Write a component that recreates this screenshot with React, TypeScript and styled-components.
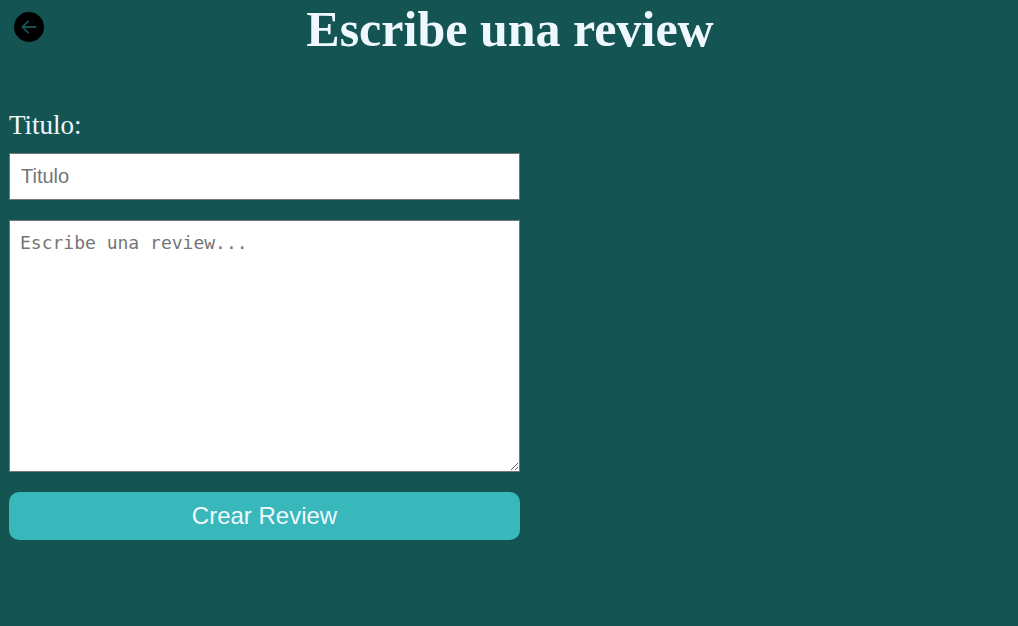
import React from "react";
import styled, { createGlobalStyle } from "styled-components";
import { BsArrowLeftCircleFill } from "react-icons/bs";

const GlobalStyle = createGlobalStyle`
  *, *::before, *::after {
    box-sizing: border-box;
  }
  body {
    margin: 0;
    min-height: 100vh;
    background: #145553;
    color: aliceblue;
    font-family: "Liberation Serif", "Times New Roman", serif;
  }
`;

const Header = styled.header`
  display: grid;
  grid-template-columns: 44px 1fr 42px;
  align-items: start;
`;

const BackLink = styled.a`
  display: block;
  margin: 12px 0 0 14px;
  height: 30px;
  color: #000;

  svg {
    display: block;
    width: 30px;
    height: 30px;
  }
`;

const Title = styled.h1`
  margin: 0;
  font-size: 50px;
  line-height: 58px;
  text-align: center;
`;

const Form = styled.form`
  display: flex;
  flex-direction: column;
  gap: 20px;
  max-width: 529px;
  padding: 52px 9px 20px;
`;

const Field = styled.div`
  display: flex;
  flex-direction: column;
  gap: 12px;
`;

const Label = styled.label`
  font-size: 27px;
  line-height: 31px;
`;

const TextInput = styled.input`
  width: 100%;
  height: 47px;
  padding: 10px 11px;
  border: 1px solid #767676;
  border-radius: 0;
  background: #fff;
  color: #000;
  font: 20px "Liberation Sans", Arial, sans-serif;

  &::placeholder {
    color: #757575;
  }
`;

const TextArea = styled.textarea`
  display: block;
  width: 100%;
  height: 252px;
  padding: 10px;
  border: 1px solid #767676;
  border-radius: 0;
  background: #fff;
  color: #000;
  font: 18px/24px "DejaVu Sans Mono", monospace;

  &::placeholder {
    color: #757575;
  }
`;

const SubmitButton = styled.button`
  height: 48px;
  border: 0;
  border-radius: 10px;
  background: #38b8ba;
  color: aliceblue;
  font: 24px "Liberation Sans", Arial, sans-serif;
  cursor: pointer;
`;

export default function App() {
  return (
    <>
      <GlobalStyle />
      <Header>
        <BackLink href="#" aria-label="Volver">
          <BsArrowLeftCircleFill />
        </BackLink>
        <Title>Escribe una review</Title>
      </Header>
      <main>
        <Form onSubmit={(event) => event.preventDefault()}>
          <Field>
            <Label htmlFor="titulo">Titulo:</Label>
            <TextInput id="titulo" name="titulo" type="text" placeholder="Titulo" />
          </Field>
          <TextArea name="review" aria-label="Review" placeholder="Escribe una review..." />
          <SubmitButton type="submit">Crear Review</SubmitButton>
        </Form>
      </main>
    </>
  );
}
